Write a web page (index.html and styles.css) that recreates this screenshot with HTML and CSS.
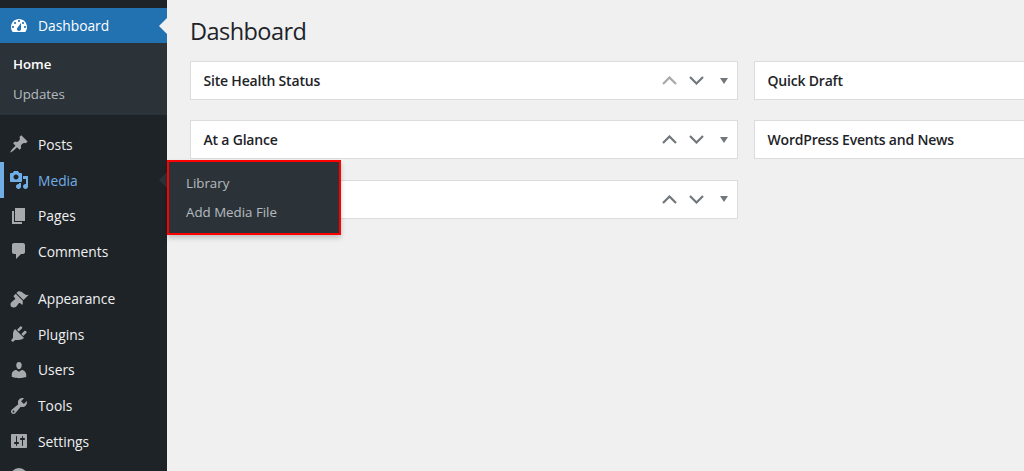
FILE: index.html
```html
<!DOCTYPE html>
<html lang="en">
<head>
<meta charset="utf-8">
<title>Dashboard</title>
<link rel="stylesheet" href="styles.css">
</head>
<body>
<div class="app">
<nav class="side">
  <a class="item current"><svg class="ico" viewBox="0 0 20 20"><path d="M3.76 16h12.48c1.1-1.37 1.76-3.11 1.76-5 0-4.42-3.58-8-8-8s-8 3.58-8 8c0 1.89.66 3.63 1.76 5zM10 4c.55 0 1 .45 1 1s-.45 1-1 1-1-.45-1-1 .45-1 1-1zM6 6c.55 0 1 .45 1 1s-.45 1-1 1-1-.45-1-1 .45-1 1-1zm8 0c.55 0 1 .45 1 1s-.45 1-1 1-1-.45-1-1 .45-1 1-1zm-5.37 5.55L12 7v6c0 1.1-.9 2-2 2s-2-.9-2-2c0-.57.24-1.08.63-1.45zM4 10c.55 0 1 .45 1 1s-.45 1-1 1-1-.45-1-1 .45-1 1-1zm12 0c.55 0 1 .45 1 1s-.45 1-1 1-1-.45-1-1 .45-1 1-1z"/></svg><span>Dashboard</span></a>
  <div class="sub">
    <a class="sub-link on">Home</a>
    <a class="sub-link">Updates</a>
  </div>
  <div class="group">
    <a class="item"><svg class="ico" viewBox="0 0 20 20"><path d="M10.44 3.02l1.82-1.82 6.36 6.35-1.83 1.82c-1.05-.68-2.48-.57-3.41.36l-.75.75c-.92.93-1.04 2.35-.35 3.41l-1.83 1.82-2.41-2.41-2.8 2.79c-.42.42-3.38 2.71-3.8 2.29s1.86-3.39 2.28-3.81l2.79-2.79L4.1 9.36l1.83-1.82c1.05.69 2.48.57 3.4-.36l.75-.75c.93-.92 1.05-2.35.36-3.41z"/></svg><span>Posts</span></a>
    <a class="item media"><svg class="ico" viewBox="0 0 20 20"><path d="M13 11V4c0-.55-.45-1-1-1h-1.67L9 1H5L3.67 3H2c-.55 0-1 .45-1 1v7c0 .55.45 1 1 1h10c.55 0 1-.45 1-1zM7 4.5c1.38 0 2.5 1.12 2.5 2.5S8.38 9.5 7 9.5 4.5 8.38 4.5 7 5.62 4.5 7 4.5zM14 6h5v10.5c0 1.38-1.12 2.5-2.5 2.5S14 17.88 14 16.5s1.12-2.5 2.5-2.5c.17 0 .34.02.5.05V9h-3V6zm-4 8.05V13h2v3.5c0 1.38-1.12 2.5-2.5 2.5S7 17.88 7 16.5 8.12 14 9.5 14c.17 0 .34.02.5.05z"/></svg><span>Media</span></a>
    <a class="item"><svg class="ico" viewBox="0 0 20 20"><path d="M6 15V2h10v13H6zm-1 1h8v2H3V5h2v11z"/></svg><span>Pages</span></a>
    <a class="item"><svg class="ico" viewBox="0 0 20 20"><path d="M5 2h9c1.1 0 2 .9 2 2v7c0 1.1-.9 2-2 2h-2l-5 5v-5H5c-1.1 0-2-.9-2-2V4c0-1.1.9-2 2-2z"/></svg><span>Comments</span></a>
  </div>
  <div class="group">
    <a class="item"><svg class="ico" viewBox="0 0 20 20"><path d="M14.48 11.06L7.41 3.99l1.5-1.5c.5-.56 2.3-.47 3.51.32 1.21.8 1.43 1.28 2.91 2.1 1.18.64 2.45 1.26 4.45.85zm-.71.71L6.7 4.7 4.93 6.47c-.39.39-.39 1.02 0 1.41l1.06 1.06c.39.39.39 1.03 0 1.42-.6.6-1.43 1.11-2.21 1.69-.35.26-.7.53-1.01.84C1.43 13.71.96 15.65 2.16 17.84c2.19 1.2 4.13.73 5.17-.31.31-.31.58-.66.84-1.01.58-.78 1.09-1.61 1.69-2.21.39-.39 1.03-.39 1.42 0l1.06 1.06c.39.39 1.02.39 1.41 0z"/></svg><span>Appearance</span></a>
    <a class="item"><svg class="ico" viewBox="0 0 20 20"><path d="M13.11 4.36L9.87 7.6 8 5.72l3.24-3.24c.35-.34 1.05-.2 1.56.32.52.51.66 1.21.31 1.56zm-8 1.77l.91-1.12 9.01 9.01-1.19.84c-.71.71-2.63 1.16-3.82 1.16H6.14L4.9 17.26c-.59.59-1.54.59-2.12 0-.59-.58-.59-1.53 0-2.12l1.24-1.24v-3.88c0-1.13.4-3.19 1.09-3.89zm7.26 3.97l3.24-3.24c.34-.35 1.04-.21 1.55.31.52.51.66 1.21.31 1.55l-3.24 3.25z"/></svg><span>Plugins</span></a>
    <a class="item"><svg class="ico" viewBox="0 0 20 20"><path d="M10 9.25c-2.27 0-2.73-3.44-2.73-3.44C7 4.02 7.82 2 9.97 2c2.16 0 2.98 2.02 2.71 3.81 0 0-.41 3.44-2.68 3.44zm0 2.57L12.72 10c2.39 0 4.52 2.33 4.52 4.53v2.49s-3.65 1.13-7.24 1.13c-3.65 0-7.24-1.13-7.24-1.13v-2.49c0-2.25 1.94-4.48 4.47-4.48z"/></svg><span>Users</span></a>
    <a class="item"><svg class="ico" viewBox="0 0 20 20"><path d="M16.68 9.77c-1.34 1.34-3.3 1.67-4.95.99l-5.41 6.52c-.99.99-2.59.99-3.58 0s-.99-2.59 0-3.57l6.52-5.42c-.68-1.65-.35-3.61.99-4.95 1.28-1.28 3.12-1.62 4.72-1.06l-2.89 2.89 2.82 2.82 2.86-2.87c.53 1.58.18 3.39-1.08 4.65zM3.81 16.21c.4.39 1.04.39 1.43 0 .4-.4.4-1.04 0-1.43-.39-.4-1.03-.4-1.43 0-.39.39-.39 1.03 0 1.43z"/></svg><span>Tools</span></a>
    <a class="item"><svg class="ico" viewBox="0 0 20 20"><path d="M18 16V4c0-.55-.45-1-1-1H3c-.55 0-1 .45-1 1v12c0 .55.45 1 1 1h14c.55 0 1-.45 1-1zM8 11h1c.55 0 1 .45 1 1s-.45 1-1 1H8v1.5c0 .28-.22.5-.5.5s-.5-.22-.5-.5V13H6c-.55 0-1-.45-1-1s.45-1 1-1h1V5.5c0-.28.22-.5.5-.5s.5.22.5.5V11zm5-2h-1c-.55 0-1-.45-1-1s.45-1 1-1h1V5.5c0-.28.22-.5.5-.5s.5.22.5.5V7h1c.55 0 1 .45 1 1s-.45 1-1 1h-1v5.5c0 .28-.22.5-.5.5s-.5-.22-.5-.5V9z"/></svg><span>Settings</span></a>
    <a class="item"><svg class="ico" viewBox="0 0 20 20"><circle cx="10" cy="10" r="9"/></svg></a>
  </div>
</nav>
<main class="main">
  <h1 class="title">Dashboard</h1>
  <div class="columns">
    <div class="col col-a">
      <section class="box"><h2 class="box-title">Site Health Status</h2><div class="ctrls"><svg class="chev dim" viewBox="0 0 15 9"><path d="M1 8l6.500-6.500L14 8"/></svg><svg class="chev" viewBox="0 0 15 9"><path d="M1 1l6.500 6.500L14 1"/></svg><i class="tri"></i></div></section>
      <section class="box"><h2 class="box-title">At a Glance</h2><div class="ctrls"><svg class="chev" viewBox="0 0 15 9"><path d="M1 8l6.500-6.500L14 8"/></svg><svg class="chev" viewBox="0 0 15 9"><path d="M1 1l6.500 6.500L14 1"/></svg><i class="tri"></i></div></section>
      <section class="box"><h2 class="box-title"></h2><div class="ctrls"><svg class="chev" viewBox="0 0 15 9"><path d="M1 8l6.500-6.500L14 8"/></svg><svg class="chev" viewBox="0 0 15 9"><path d="M1 1l6.500 6.500L14 1"/></svg><i class="tri"></i></div></section>
    </div>
    <div class="col col-b">
      <section class="box"><h2 class="box-title">Quick Draft</h2></section>
      <section class="box"><h2 class="box-title">WordPress Events and News</h2></section>
    </div>
  </div>
</main>
</div>
<div class="flyout">
  <a class="fly-link">Library</a>
  <a class="fly-link">Add Media File</a>
</div>
</body>
</html>
```
FILE: styles.css
```css
* { box-sizing: border-box; }
html, body { margin: 0; height: 100%; overflow: hidden; }
body { background: #f0f0f1; font-family: "Open Sans", "Liberation Sans", sans-serif; color: #1d2327; }
.app { display: flex; height: 471px; overflow: hidden; }
.side { width: 167px; flex: none; background: #1d2327; padding-top: 8px; height: 520px; }
.item { display: flex; align-items: center; height: 35.7px; padding-left: 9px; color: #f0f0f1; font-size: 13.8px; }
.ico { width: 20px; height: 20px; fill: #a7aaad; flex: none; margin-right: 9px; }
.current { background: #2271b1; color: #fff; position: relative; height: 35px; }
.current .ico { fill: #fff; }
.current::after { content: ""; position: absolute; right: 0; top: 10px; border: 8px solid transparent; border-right-color: #f0f0f1; border-left-width: 0; }
.media { color: #72aee6; position: relative; box-shadow: inset 4px 0 0 #72aee6; }
.media .ico { fill: #72aee6; }
.media::after { content: ""; position: absolute; right: 0; top: 10px; border: 8px solid transparent; border-right-color: #2c3338; border-left-width: 0; }
.sub { background: #2c3338; height: 72px; padding-top: 7px; }
.sub-link { display: block; height: 29.5px; line-height: 29px; padding-left: 13px; font-size: 13.3px; color: rgba(240,246,252,.7); }
.sub-link.on { color: #fff; font-weight: 600; }
.group { padding-top: 11.5px; }
.main { flex: 1; min-width: 0; padding-left: 23px; }
.title { margin: 0; height: 61px; padding-top: 15px; font-size: 23.5px; font-weight: 400; line-height: 33px; letter-spacing: -0.55px; }
.columns { display: flex; gap: 16px; }
.col { display: flex; flex-direction: column; gap: 20.3px; flex: none; }
.col-a { width: 548px; }
.col-b { width: 400px; }
.box { display: flex; align-items: center; height: 39px; background: #fff; border: 1px solid #dcdcde; padding-left: 12.500px; }
.box-title { flex: 1; margin: 0; font-size: 14px; font-weight: 600; letter-spacing: -0.2px; position: relative; top: -0.5px; }
.ctrls { display: flex; align-items: center; gap: 12px; padding-right: 9px; }
.chev { width: 15px; height: 9px; fill: none; stroke: #72777c; stroke-width: 2.200; }
.chev.dim { stroke: #a7aaad; }
.tri { width: 0; height: 0; margin-left: 4px; border: 4.500px solid transparent; border-top: 6px solid #72777c; border-bottom: 0; }
.flyout { position: absolute; left: 167px; top: 160px; width: 174px; height: 75px; background: #2c3338; border: 2px solid #f00; box-shadow: 0 3px 5px rgba(0,0,0,.2); padding-top: 6.500px; }
.fly-link { display: block; height: 29.2px; line-height: 29px; padding-left: 17px; font-size: 13.3px; color: rgba(240,246,252,.7); }
```
